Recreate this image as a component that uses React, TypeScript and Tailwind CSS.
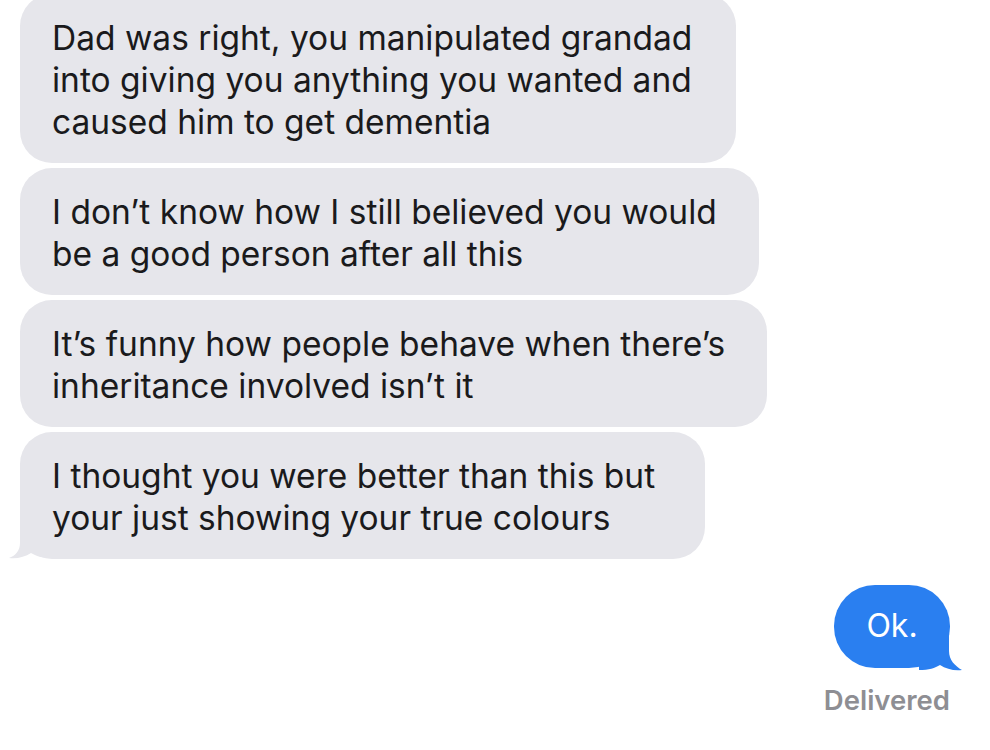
import React from "react";

const font = { fontFamily: "Inter, 'Liberation Sans', sans-serif" };

function Bubble({
  lines,
  tail,
  extra,
}: {
  lines: string[];
  tail?: boolean;
  extra?: string;
}) {
  return (
    <div
      className={`relative w-fit rounded-[32px] bg-[#e6e6eb] pl-[32px] pt-[23px] pb-[20px] text-[33.5px] leading-[42px] text-[#1a1a1c] ${
        extra ?? "pr-[40px]"
      }`}
    >
      {lines.map((l, i) => (
        <div key={i} className="whitespace-nowrap">
          {l}
        </div>
      ))}
      {tail && (
        <svg
          className="absolute left-[-12px] bottom-0"
          width="44"
          height="36"
          viewBox="0 0 44 36"
        >
          <path
            d="M12 0 L12 20 C12 28 7 33 1 35 C9 36 17 34 23 30 C28 33 34 35 44 35 L44 0 Z"
            fill="#e6e6eb"
          />
        </svg>
      )}
    </div>
  );
}

export default function App() {
  return (
    <div
      className="w-[990px] h-[750px] overflow-hidden bg-white relative"
      style={font}
    >
      <div className="flex flex-col gap-[5px] pl-[20px] -mt-[6px]">
        <Bubble
          extra="pr-[44px]"
          lines={[
            "Dad was right, you manipulated grandad",
            "into giving you anything you wanted and",
            "caused him to get dementia",
          ]}
        />
        <Bubble
          extra="pr-[42px]"
          lines={[
            "I don\u2019t know how I still believed you would",
            "be a good person after all this",
          ]}
        />
        <Bubble
          extra="pr-[42px]"
          lines={[
            "It\u2019s funny how people behave when there\u2019s",
            "inheritance involved isn\u2019t it",
          ]}
        />
        <Bubble
          tail
          extra="pr-[50px]"
          lines={[
            "I thought you were better than this but",
            "your just showing your true colours",
          ]}
        />
      </div>
      <div className="flex flex-col items-end pr-[40px] mt-[26px]">
        <div className="relative w-[116px] h-[83px] rounded-[41px] bg-[#2a7ff0] flex items-center justify-center text-white text-[32px]">
          <span className="relative -mt-[2px]">Ok.</span>
          <svg
            className="absolute right-[-13px] bottom-[-3px]"
            width="44"
            height="38"
            viewBox="0 0 44 38"
          >
            <path
              d="M30 0 L30 18 C30 27 36 33 43 37 C35 38 27 36 21 32 C16 35 10 37 0 37 L0 0 Z"
              fill="#2a7ff0"
            />
          </svg>
        </div>
        <div className="mt-[12px] text-[27.5px] font-semibold text-[#8e8e93]">
          Delivered
        </div>
      </div>
    </div>
  );
}
